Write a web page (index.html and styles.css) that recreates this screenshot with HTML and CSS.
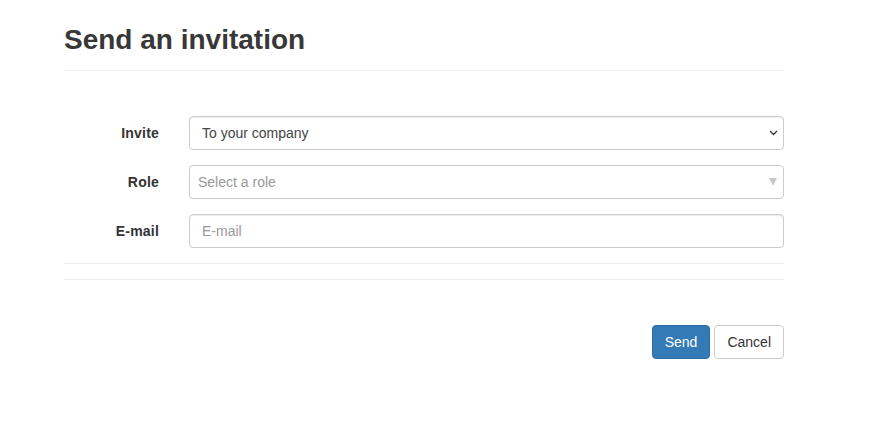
FILE: index.html
```html
<!DOCTYPE html>
<html>
<head>
<meta charset="utf-8">
<link rel="stylesheet" href="styles.css">
</head>
<body>
<div class="container">
  <h1 class="title">Send an invitation</h1>
  <hr class="rule">
  <form class="form">
    <div class="row">
      <label class="label">Invite</label>
      <div class="select-wrap">
        <select class="control select-native">
          <option>To your company</option>
        </select>
        <svg class="chevron" width="9" height="6" viewBox="0 0 9 6"><path d="M1 1 L4.5 4.5 L8 1" fill="none" stroke="#333" stroke-width="1.3"/></svg>
      </div>
    </div>
    <div class="row">
      <label class="label">Role</label>
      <div class="control fake-select">
        <span class="placeholder">Select a role</span>
        <span class="tri"></span>
      </div>
    </div>
    <div class="row">
      <label class="label">E-mail</label>
      <input class="control input" type="text" placeholder="E-mail">
    </div>
  </form>
  <hr class="rule rule-a">
  <hr class="rule rule-b">
  <div class="actions">
    <button class="btn btn-primary" type="button">Send</button>
    <button class="btn btn-default" type="button">Cancel</button>
  </div>
</div>
</body>
</html>
```

FILE: styles.css
```css
* { box-sizing: border-box; }
html, body { margin: 0; padding: 0; background: #fff; }
body {
  font-family: "Liberation Sans", Arial, sans-serif;
  font-size: 14px;
  color: #333;
}
.container {
  width: 720px;
  margin-left: 64px;
}
.title {
  margin: 24px 0 0;
  font-size: 28px;
  line-height: 31px;
  font-weight: bold;
  color: #383838;
}
.rule {
  margin: 15px 0 0;
  border: 0;
  border-top: 1px solid #eee;
  height: 0;
}
.form {
  margin-top: 45px;
  display: flex;
  flex-direction: column;
  gap: 15px;
}
.row {
  display: grid;
  grid-template-columns: 95px 1fr;
  column-gap: 30px;
  align-items: center;
}
.label {
  text-align: right;
  font-weight: bold;
  font-size: 14px;
  letter-spacing: 0.2px;
}
.control {
  height: 34px;
  width: 100%;
  border: 1px solid #ccc;
  border-radius: 4px;
  font-family: "Liberation Sans", Arial, sans-serif;
  font-size: 14px;
  color: #555;
  background: #fff;
  box-shadow: inset 0 1px 1px rgba(0,0,0,.075);
}
.select-wrap {
  position: relative;
}
.select-native {
  appearance: none;
  -webkit-appearance: none;
  display: block;
  padding: 6px 24px 6px 12px;
  color: #444;
}
.chevron {
  position: absolute;
  right: 6px;
  top: 14px;
  pointer-events: none;
}
.fake-select {
  display: flex;
  align-items: center;
  justify-content: space-between;
  padding: 0 6px 0 8px;
  box-shadow: none;
}
.placeholder { color: #999; }
.tri {
  width: 0;
  height: 0;
  border-left: 4px solid transparent;
  border-right: 4px solid transparent;
  border-top: 8px solid #c8c8c8;
}
.input {
  padding: 6px 12px;
}
.input::placeholder { color: #999; }
.rule-a { margin-top: 15px; }
.rule-b { margin-top: 15px; }
.actions {
  margin-top: 45px;
  display: flex;
  justify-content: flex-end;
  gap: 4px;
}
.btn {
  height: 34px;
  padding: 6px 12px;
  font-family: "Liberation Sans", Arial, sans-serif;
  font-size: 14px;
  border-radius: 4px;
  border: 1px solid #ccc;
  cursor: pointer;
}
.btn-primary {
  background: #337ab7;
  border-color: #2e6da4;
  color: #fff;
}
.btn-default {
  background: #fff;
  color: #333;
}
```
